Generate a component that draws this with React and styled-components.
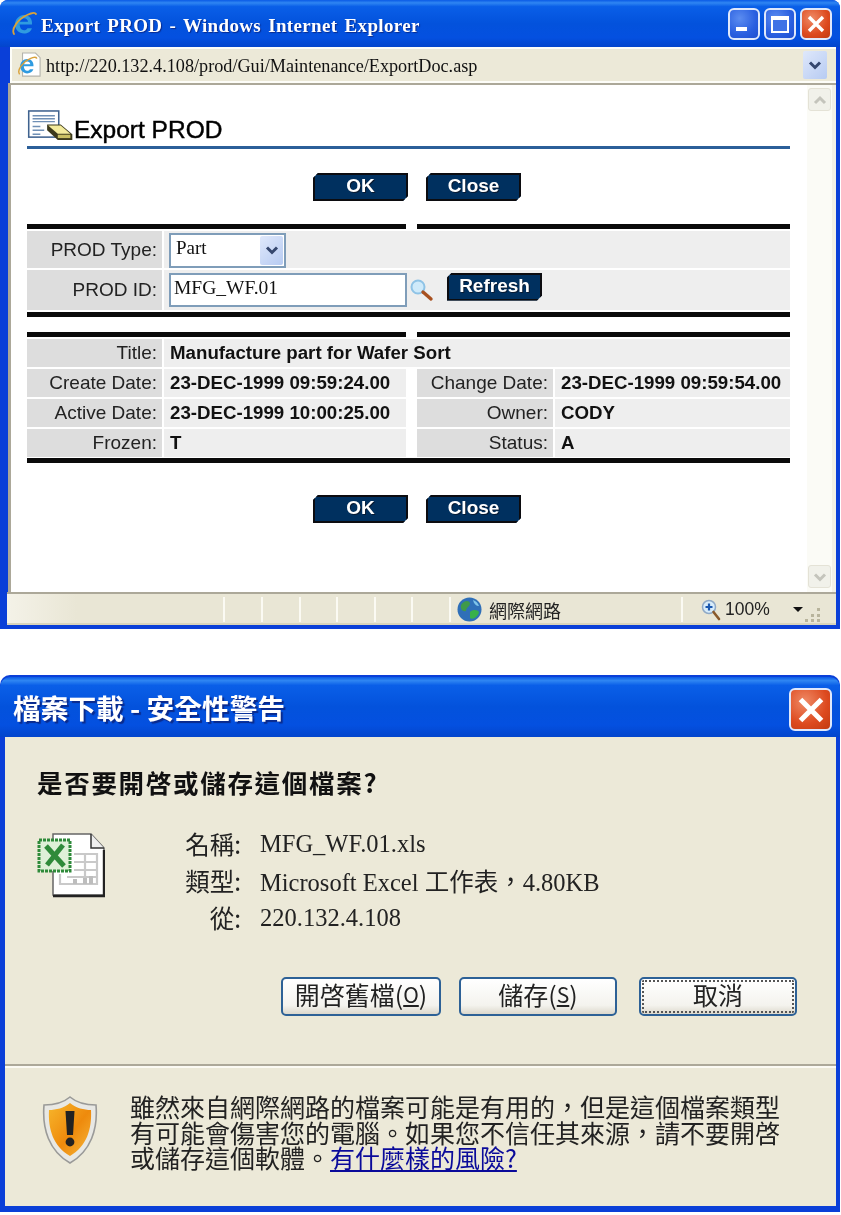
import React from "react";
import styled, { createGlobalStyle } from "styled-components";

const sans = `"Liberation Sans", Arial, sans-serif`;
const serif = `"Liberation Serif", "Noto Sans CJK TC", serif`;
const cjk = `"Noto Sans CJK TC", "Liberation Sans", sans-serif`;

const GlobalStyle = createGlobalStyle`
  html, body {
    margin: 0;
    padding: 0;
    background: #fff;
  }
`;

const Page = styled.div`
  width: 841px;
  height: 1215px;
  overflow: hidden;
  background: #fff;
  filter: blur(0.45px);
`;

/* browser window */
const BrowserWindow = styled.div`
  width: 840px;
  height: 629px;
  box-sizing: border-box;
  display: flex;
  flex-direction: column;
  background: #0a3fd8;
  border-radius: 8px 8px 0 0;
  padding: 0 4px 4px 0;
`;

const TitleBar = styled.div`
  height: ${(p) => p.$height}px;
  flex: none;
  display: flex;
  align-items: center;
  background: linear-gradient(
    180deg,
    #0a5ae6 0,
    #2f86f2 6%,
    #0a5fe8 14%,
    #0352dc 50%,
    #0450e0 80%,
    #0345cc 100%
  );
`;

const BrowserTitleBar = styled(TitleBar)`
  padding: 0 3px 0 11px;
  gap: 4px;
  margin-right: -4px;
  border-radius: 8px 8px 0 0;
`;

const BrowserTitle = styled.div`
  flex: 1;
  padding-top: 4px;
  font: bold 19px ${serif};
  letter-spacing: 0.35px;
  word-spacing: 2px;
  color: #fff;
  text-shadow: 1px 1px 1px #0a2a8c;
  white-space: nowrap;
`;

const CaptionButtons = styled.div`
  display: flex;
  gap: 4px;
  margin-right: 5px;
`;

const CaptionButton = styled.div`
  width: ${(p) => p.$size || 32}px;
  height: ${(p) => p.$size || 32}px;
  box-sizing: border-box;
  border: 2px solid #dfe8fb;
  border-radius: 6px;
  display: flex;
  align-items: center;
  justify-content: center;
  background: ${(p) =>
    p.$danger
      ? "radial-gradient(circle at 35% 30%, #ef8a66, #dd4a1f 60%, #c23a12)"
      : "radial-gradient(circle at 35% 30%, #5b8cf0, #2a5fe0 60%, #1e4fd0)"};
`;

const AddressBar = styled.div`
  height: 36px;
  flex: none;
  margin-left: 10px;
  display: flex;
  align-items: center;
  box-sizing: border-box;
  background: #ece9d8;
  border: 2px solid #fdfdf8;
  border-right: 0;
  padding: 0 9px 0 5px;
  gap: 5px;
`;

const AddressText = styled.div`
  flex: 1;
  padding-top: 3px;
  font: 18.2px ${serif};
  color: #111;
  white-space: nowrap;
`;

const ComboArrow = styled.div`
  width: ${(p) => p.$width}px;
  height: ${(p) => p.$height}px;
  flex: none;
  display: flex;
  align-items: center;
  justify-content: center;
  background: linear-gradient(135deg, #dfe8fb, #b7cbf2);
  border-radius: 2px;
`;

const BrowserBody = styled.div`
  flex: 1;
  min-height: 0;
  display: flex;
  margin-left: 8px;
  background: #fff;
  border-left: 3px solid #aca899;
  border-top: 2px solid #aca899;
`;

const Content = styled.div`
  width: 796px;
  flex: none;
  padding: 24px 0 0 16px;
  box-sizing: border-box;
`;

const Scrollbar = styled.div`
  flex: 1;
  display: flex;
  flex-direction: column;
  justify-content: space-between;
  align-items: flex-start;
  padding: 3px 0 4px 1px;
  background: #fbfbf6;
  border-right: 4px solid #f2f0e6;
`;

const ScrollButton = styled.div`
  width: 23px;
  height: 23px;
  box-sizing: border-box;
  display: flex;
  align-items: center;
  justify-content: center;
  background: #f1f1ea;
  border: 1px solid #e4e2d6;
  border-radius: 3px;
`;

const Heading = styled.div`
  width: 763px;
  height: 36px;
  display: flex;
  align-items: flex-end;
  border-bottom: 3px solid #2b5f99;
  padding-bottom: 1px;
`;

const HeadingIcon = styled.svg`
  width: 48px;
  height: 31px;
  flex: none;
  align-self: flex-start;
  margin-top: 1px;
`;

const HeadingText = styled.h1`
  margin: 0 0 0 -1px;
  font: 24.5px ${sans};
  font-weight: 400;
  -webkit-text-stroke: 0.45px #000;
  color: #000;
  line-height: 30px;
`;

const ButtonRow = styled.div`
  width: 763px;
  display: flex;
  justify-content: center;
  gap: 18px;
  margin-top: ${(p) => p.$top}px;
  padding-left: 17px;
  box-sizing: border-box;
`;

const NavyButton = styled.div`
  width: ${(p) => p.$width || 95}px;
  height: 28px;
  flex: none;
  display: flex;
  align-items: center;
  justify-content: center;
  box-sizing: border-box;
  background: #00305f;
  box-shadow: inset 0 0 0 2px #0c0c10;
  clip-path: polygon(
    5px 0,
    100% 0,
    100% calc(100% - 5px),
    calc(100% - 5px) 100%,
    0 100%,
    0 5px
  );
  color: #fff;
  font: bold 19px ${sans};
  padding-bottom: 2px;
  text-shadow: 1px 1px 0 #0a1a30;
`;

const Section = styled.div`
  width: 763px;
  margin-top: ${(p) => p.$top}px;
`;

const RuleRow = styled.div`
  display: flex;
  gap: 11px;
`;

const Rule = styled.div`
  height: 5px;
  background: #0a0a0a;
  flex: ${(p) => (p.$full ? "1" : `0 0 ${p.$width}px`)};
`;

const Rows = styled.div`
  display: flex;
  flex-direction: column;
  gap: 2px;
  padding: 2px 0 ${(p) => p.$bottom ?? 2}px;
`;

const Row = styled.div`
  display: flex;
  gap: 11px;
  height: ${(p) => p.$height}px;
`;

const Field = styled.div`
  display: flex;
  gap: 2px;
  flex: ${(p) => (p.$width ? `0 0 ${p.$width}px` : "1")};
`;

const Label = styled.div`
  flex: 0 0 ${(p) => p.$width || 135}px;
  box-sizing: border-box;
  background: #dddddd;
  display: flex;
  align-items: center;
  justify-content: flex-end;
  padding-right: 5px;
  font: 19px ${sans};
  color: #222;
  white-space: nowrap;
`;

const Value = styled.div`
  flex: 1;
  background: #eeeeee;
  display: flex;
  align-items: center;
  padding-left: ${(p) => p.$pad ?? 6}px;
  font: bold 18.7px ${sans};
  color: #111;
  white-space: nowrap;
`;

const SelectBox = styled.div`
  width: 117px;
  height: 35px;
  box-sizing: border-box;
  margin-top: 1px;
  border: 2px solid #7f9db9;
  background: #fff;
  display: flex;
  align-items: center;
  justify-content: space-between;
  padding: 0 1px 0 5px;
  font: 400 19px ${serif};
  color: #111;
`;

const SelectText = styled.span`
  padding-bottom: 4px;
`;

const TextBox = styled.div`
  width: 238px;
  height: 34px;
  box-sizing: border-box;
  border: 2px solid #7f9db9;
  background: #fff;
  display: flex;
  align-items: center;
  padding: 0 0 4px 3px;
  font: 400 19.5px ${serif};
  color: #111;
`;

const LookupIcon = styled.svg`
  width: 26px;
  height: 26px;
  margin: 0 13px 0 1px;
  flex: none;
`;

const RefreshButton = styled(NavyButton)`
  margin-top: -7px;
`;

const StatusBar = styled.div`
  height: 33px;
  flex: none;
  margin-left: 7px;
  display: flex;
  align-items: stretch;
  box-sizing: border-box;
  background: linear-gradient(90deg, #f4f2e8 0, #e9e6d5 70px);
  border-top: 2px solid #aca899;
  border-bottom: 2px solid #d8d4bc;
`;

const StatusLead = styled.div`
  width: 216px;
  flex: none;
`;

const StatusCell = styled.div`
  flex: 0 0 ${(p) => p.$width}px;
  box-sizing: border-box;
  border-left: 2px solid #fbfaf3;
  margin: 3px 0 1px;
  display: flex;
  align-items: center;
  gap: ${(p) => p.$gap || 0}px;
  padding-left: ${(p) => p.$pad || 0}px;
  font: 18px ${cjk};
  color: #222;
  white-space: nowrap;
`;

const ZoomText = styled.span`
  font: 17.5px ${sans};
  margin-left: 4px;
`;

const DropCaret = styled.span`
  width: 0;
  height: 0;
  margin-left: 23px;
  border: 5px solid transparent;
  border-top: 5px solid #111;
  border-bottom: 0;
`;

const Grip = styled.svg`
  width: 18px;
  height: 18px;
  margin-left: auto;
  margin-right: 1px;
  align-self: flex-end;
`;

/* download dialog */
const Dialog = styled.div`
  width: 840px;
  height: 537px;
  margin-top: 46px;
  box-sizing: border-box;
  display: flex;
  flex-direction: column;
  background: #0a3fd8;
  border-radius: 10px 10px 0 0;
  padding: 2px 4px 6px 5px;
`;

const DialogTitleBar = styled(TitleBar)`
  margin: 0 -4px 0 -5px;
  padding: 0 8px 0 13px;
  border-radius: 10px 10px 0 0;
  justify-content: space-between;
`;

const DialogTitle = styled.div`
  font: bold 27.7px ${cjk};
  color: #fff;
  text-shadow: 2px 2px 1px #0a2a8c;
  white-space: nowrap;
`;

const DialogClose = styled(CaptionButton)`
  margin-top: 5px;
`;

const DialogBody = styled.div`
  flex: 1;
  display: flex;
  flex-direction: column;
  background: #ece9d8;
`;

const DialogMain = styled.div`
  height: 329px;
  box-sizing: border-box;
  padding: 27px 0 0 32px;
  border-bottom: 2px solid #aca899;
  flex: none;
`;

const Question = styled.div`
  font: bold 25.5px ${cjk};
  line-height: 36px;
  letter-spacing: 1.7px;
  color: #111;
`;

const FileInfo = styled.div`
  display: flex;
  margin-top: 29px;
`;

const FileIcon = styled.svg`
  width: 68px;
  height: 66px;
  flex: none;
  margin-top: 3px;
`;

const FileRows = styled.div`
  display: grid;
  grid-template-columns: 136px auto;
  grid-auto-rows: 37px;
  column-gap: 19px;
  align-items: center;
  margin-top: -4px;
`;

const FileLabel = styled.div`
  font: 24.5px ${cjk};
  color: #222;
  text-align: right;
  white-space: nowrap;
`;

const FileValue = styled.div`
  font: 24.5px ${serif};
  color: #222;
  white-space: nowrap;
`;

const DialogButtons = styled.div`
  display: flex;
  margin: 41px 0 0 244px;
  gap: 18px;
`;

const DialogButton = styled.div`
  width: ${(p) => p.$width}px;
  height: 39px;
  margin-left: ${(p) => p.$shift || 0}px;
  box-sizing: border-box;
  border: 2px solid #2d6196;
  border-radius: 5px;
  background: linear-gradient(180deg, #ffffff, #f4f3ee 75%, #dcd8cc);
  display: flex;
  align-items: center;
  justify-content: center;
  padding-bottom: 5px;
  font: 25px ${cjk};
  color: #222;
  outline: ${(p) => (p.$focused ? "2px dotted #555" : "none")};
  outline-offset: -5px;
`;

const Mnemonic = styled.span`
  font-size: 21px;
  text-decoration: underline;
`;

const WarningPane = styled.div`
  flex: 1;
  display: flex;
  border-top: 2px solid #fbfaf3;
  padding: 26px 0 0 37px;
  gap: 32px;
`;

const ShieldIcon = styled.svg`
  width: 56px;
  height: 68px;
  flex: none;
  margin-top: 2px;
`;

const WarningText = styled.div`
  font: 25px/25.6px ${cjk};
  color: #222;
  white-space: nowrap;
`;

const RiskLink = styled.a`
  color: #0a0a9a;
  text-decoration: underline;
`;

const Chevron = ({ color, up, size = 16 }) => (
  <svg width={size} height={size} viewBox="0 0 16 16">
    <path
      d={up ? "M3 11 L8 6 L13 11" : "M3 5.5 L8 10.5 L13 5.5"}
      fill="none"
      stroke={color}
      strokeWidth="3"
    />
  </svg>
);

const IeMark = () => (
  <>
    <path
      d="M5 13.5 H21 C21.5 7.5 18 4 13 4 C8 4 4 8.5 4 13.5 C4 18.5 8 22.5 13 22.5 C16.8 22.5 19.8 20.5 20.9 17.2 H16.4 C15.6 18.6 14.5 19.2 13 19.2 C10.4 19.2 8.8 17 8.7 13.5 Z M8.8 10.8 C9.2 8.6 10.8 7.2 13 7.2 C15.2 7.2 16.8 8.6 17 10.8 Z"
      fill="#2f9be0"
      fillRule="evenodd"
    />
    <path
      d="M3 23 C0 18 7 8 16 4 C20 2 24 1 25 3"
      fill="none"
      stroke="#d9a23a"
      strokeWidth="1.8"
      strokeLinecap="round"
    />
  </>
);

const IeLogo = () => (
  <svg width="26" height="26" viewBox="0 0 26 26">
    <IeMark />
  </svg>
);

const PageIcon = () => (
  <svg width="24" height="26" viewBox="0 0 26 28">
    <path d="M6 1 H20 L25 6 V26 H6 Z" fill="#fff" stroke="#b4b4ac" strokeWidth="1.2" />
    <g transform="translate(0 4) scale(0.85)">
      <IeMark />
    </g>
  </svg>
);

const Magnifier = () => (
  <LookupIcon viewBox="0 0 26 26">
    <circle cx="10" cy="10" r="6.5" fill="#cfeafa" stroke="#8fc3e6" strokeWidth="2" />
    <path d="M15 15 L23 22" stroke="#a8501f" strokeWidth="3.4" strokeLinecap="round" />
  </LookupIcon>
);

const Globe = () => (
  <svg width="25" height="25" viewBox="0 0 25 25">
    <circle cx="12.5" cy="12.5" r="12" fill="#2f6fb8" />
    <path d="M4 8 C7 3 12 3 13 6 C13 10 9 10 9 14 C6 15 3 12 4 8 Z" fill="#3f9a4a" />
    <path d="M13 15 C16 12 21 13 22 15 C21 20 16 23 13 21 Z" fill="#38b04a" />
    <path d="M16 3 C19 4 21 6 22 9 C19 9 17 7 16 3 Z" fill="#7fc4ea" />
  </svg>
);

const ZoomIcon = () => (
  <svg width="20" height="22" viewBox="0 0 20 22">
    <circle cx="8" cy="8" r="6.5" fill="#d8ecfa" stroke="#8fa9c6" strokeWidth="1.5" />
    <path d="M8 4.5 V11.5 M4.5 8 H11.5" stroke="#1a58b0" strokeWidth="2.2" />
    <path d="M12.5 13 L18 20" stroke="#8a5a2a" strokeWidth="2.6" strokeLinecap="round" />
  </svg>
);

const ExportIcon = () => (
  <HeadingIcon viewBox="0 0 48 32">
    <rect x="1" y="1" width="31" height="27" fill="#fff" stroke="#3f628f" strokeWidth="1.6" />
    <path
      d="M5 6 H28 M5 9 H28 M5 12 H28 M5 17 H13 M5 21 H17 M5 25 H13"
      stroke="#6f8fb5"
      strokeWidth="1.5"
    />
    <path d="M20 15 H34 L46 25 V31 H31 L20 21 Z" fill="#3d3a1c" />
    <path d="M21 16 H34 L44 24.5 H31 Z" fill="#f3eb9c" />
    <path d="M31 25.5 H44 V29 H31 Z" fill="#c9bf63" />
  </HeadingIcon>
);

const ExcelIcon = () => (
  <FileIcon viewBox="0 0 68 66">
    <path d="M16 2 H54 L67 16 V63 H16 Z" fill="#fff" stroke="#666" strokeWidth="1.5" />
    <path d="M54 2 V16 H67" fill="#eee" stroke="#333" strokeWidth="1.5" />
    <path d="M16 64 H67 V18" fill="none" stroke="#222" strokeWidth="2.4" />
    <path
      d="M37 22 H60 V52 H23 V42 M37 30 H60 M37 38 H60 M30 45 H60 M48 22 V52"
      fill="none"
      stroke="#c9c9c9"
      strokeWidth="2.2"
    />
    <path d="M38 47 V52 M48 46 V52 M54 44 V52" stroke="#bdbdbd" strokeWidth="4" />
    <rect x="2" y="8" width="31" height="31" fill="#dff0d8" stroke="#2f8a3a" strokeWidth="3" strokeDasharray="3 1" />
    <path d="M9 14 L27 34 M26 13 L10 33" stroke="#2f8a3a" strokeWidth="5" />
  </FileIcon>
);

const Shield = () => (
  <ShieldIcon viewBox="0 0 56 68">
    <defs>
      <linearGradient id="shieldFill" x1="0" y1="0" x2="1" y2="1">
        <stop offset="0" stopColor="#f7b62c" />
        <stop offset="0.55" stopColor="#ee8a0c" />
        <stop offset="1" stopColor="#f6b73c" />
      </linearGradient>
    </defs>
    <path
      d="M28 1 C35 7 45 9 54 9 C56 33 49 55 28 67 C7 55 0 33 2 9 C11 9 21 7 28 1 Z"
      fill="#e8e8e4"
      stroke="#9a9a98"
      strokeWidth="1.6"
    />
    <path
      d="M28 7 C34 12 42 14 49 14 C50 33 45 50 28 60 C11 50 6 33 7 14 C14 14 22 12 28 7 Z"
      fill="url(#shieldFill)"
    />
    <path d="M23.5 15 H32.5 L31 39 H25 Z" fill="#222" />
    <circle cx="28" cy="46" r="4.4" fill="#222" />
  </ShieldIcon>
);

const CloseGlyph = ({ size }) => (
  <svg width={size} height={size} viewBox="0 0 20 20">
    <path d="M3 3 L17 17 M17 3 L3 17" stroke="#fff" strokeWidth="3.4" />
  </svg>
);

const PageButtons = ({ top }) => (
  <ButtonRow $top={top}>
    <NavyButton>OK</NavyButton>
    <NavyButton>Close</NavyButton>
  </ButtonRow>
);

const Rules = () => (
  <RuleRow>
    <Rule $width={379} />
    <Rule $full />
  </RuleRow>
);

const FullRule = () => <Rule $width={763} />;

const details = [
  ["Create Date:", "23-DEC-1999 09:59:24.00", "Change Date:", "23-DEC-1999 09:59:54.00"],
  ["Active Date:", "23-DEC-1999 10:00:25.00", "Owner:", "CODY"],
  ["Frozen:", "T", "Status:", "A"],
];

const App = () => (
  <Page>
    <GlobalStyle />
    <BrowserWindow>
      <BrowserTitleBar $height={47}>
        <IeLogo />
        <BrowserTitle>Export PROD - Windows Internet Explorer</BrowserTitle>
        <CaptionButtons>
          <CaptionButton>
            <svg width="20" height="20" viewBox="0 0 20 20">
              <rect x="2" y="13" width="11" height="4" fill="#fff" />
            </svg>
          </CaptionButton>
          <CaptionButton>
            <svg width="20" height="20" viewBox="0 0 20 20">
              <rect x="2" y="3" width="16" height="15" fill="#3f72e6" stroke="#fff" strokeWidth="2" />
              <rect x="2" y="3" width="16" height="3" fill="#fff" />
            </svg>
          </CaptionButton>
          <CaptionButton $danger>
            <CloseGlyph size={20} />
          </CaptionButton>
        </CaptionButtons>
      </BrowserTitleBar>
      <AddressBar>
        <PageIcon />
        <AddressText>http://220.132.4.108/prod/Gui/Maintenance/ExportDoc.asp</AddressText>
        <ComboArrow $width={24} $height={28}>
          <Chevron color="#35476e" />
        </ComboArrow>
      </AddressBar>
      <BrowserBody>
        <Content>
          <Heading>
            <ExportIcon />
            <HeadingText>Export PROD</HeadingText>
          </Heading>
          <PageButtons top={24} />
          <Section $top={23}>
            <Rules />
            <Rows>
              <Row $height={37}>
                <Field>
                  <Label>PROD Type:</Label>
                  <Value $pad={5}>
                    <SelectBox>
                      <SelectText>Part</SelectText>
                      <ComboArrow $width={23} $height={29}>
                        <Chevron color="#35476e" />
                      </ComboArrow>
                    </SelectBox>
                  </Value>
                </Field>
              </Row>
              <Row $height={40}>
                <Field>
                  <Label>PROD ID:</Label>
                  <Value $pad={5}>
                    <TextBox>MFG_WF.01</TextBox>
                    <Magnifier />
                    <RefreshButton>Refresh</RefreshButton>
                  </Value>
                </Field>
              </Row>
            </Rows>
            <FullRule />
          </Section>
          <Section $top={15}>
            <Rules />
            <Rows $bottom={1}>
              <Row $height={28}>
                <Field>
                  <Label>Title:</Label>
                  <Value>Manufacture part for Wafer Sort</Value>
                </Field>
              </Row>
              {details.map(([l1, v1, l2, v2]) => (
                <Row $height={28} key={l1}>
                  <Field $width={379}>
                    <Label>{l1}</Label>
                    <Value>{v1}</Value>
                  </Field>
                  <Field>
                    <Label $width={136}>{l2}</Label>
                    <Value>{v2}</Value>
                  </Field>
                </Row>
              ))}
            </Rows>
            <FullRule />
          </Section>
          <PageButtons top={32} />
        </Content>
        <Scrollbar>
          <ScrollButton>
            <Chevron color="#c4c4bc" up />
          </ScrollButton>
          <ScrollButton>
            <Chevron color="#c4c4bc" />
          </ScrollButton>
        </Scrollbar>
      </BrowserBody>
      <StatusBar>
        <StatusLead />
        {[38, 38, 37, 38, 37, 38].map((w, i) => (
          <StatusCell $width={w} key={i} />
        ))}
        <StatusCell $width={232} $pad={6} $gap={7}>
          <Globe />
          網際網路
        </StatusCell>
        <StatusCell $width={140} $pad={18}>
          <ZoomIcon />
          <ZoomText>100%</ZoomText>
          <DropCaret />
          <Grip viewBox="0 0 18 18">
            <path d="M14 4 h3 v3 h-3z M8 10 h3 v3 h-3z M14 10 h3 v3 h-3z M2 15 h3 v3 h-3z M8 15 h3 v3 h-3z M14 15 h3 v3 h-3z" fill="#b8b49c" />
          </Grip>
        </StatusCell>
      </StatusBar>
    </BrowserWindow>

    <Dialog>
      <DialogTitleBar $height={60}>
        <DialogTitle>檔案下載 - 安全性警告</DialogTitle>
        <DialogClose $danger $size={43}>
          <CloseGlyph size={30} />
        </DialogClose>
      </DialogTitleBar>
      <DialogBody>
        <DialogMain>
          <Question>是否要開啓或儲存這個檔案?</Question>
          <FileInfo>
            <ExcelIcon />
            <FileRows>
              <FileLabel>名稱:</FileLabel>
              <FileValue>MFG_WF.01.xls</FileValue>
              <FileLabel>類型:</FileLabel>
              <FileValue>Microsoft Excel 工作表，4.80KB</FileValue>
              <FileLabel>從:</FileLabel>
              <FileValue>220.132.4.108</FileValue>
            </FileRows>
          </FileInfo>
          <DialogButtons>
            <DialogButton $width={160}>
              開啓舊檔(<Mnemonic>O</Mnemonic>)
            </DialogButton>
            <DialogButton $width={158}>
              儲存(<Mnemonic>S</Mnemonic>)
            </DialogButton>
            <DialogButton $width={158} $shift={4} $focused>
              取消
            </DialogButton>
          </DialogButtons>
        </DialogMain>
        <WarningPane>
          <Shield />
          <WarningText>
            雖然來自網際網路的檔案可能是有用的，但是這個檔案類型
            <br />
            有可能會傷害您的電腦。如果您不信任其來源，請不要開啓
            <br />
            或儲存這個軟體。<RiskLink href="#risk">有什麼樣的風險?</RiskLink>
          </WarningText>
        </WarningPane>
      </DialogBody>
    </Dialog>
  </Page>
);

export default App;
